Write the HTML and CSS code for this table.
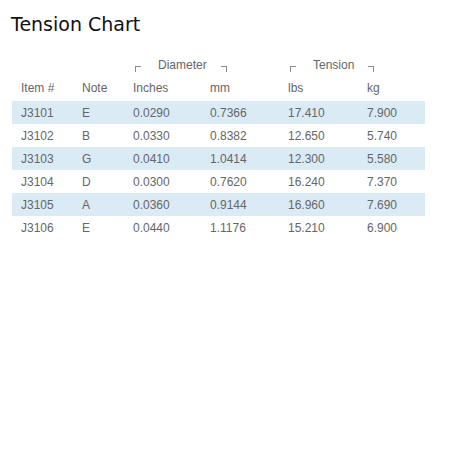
FILE: index.html
```html
<!DOCTYPE html>
<html>
<head>
<meta charset="utf-8">
<link rel="stylesheet" href="styles.css">
</head>
<body>
<h1 class="title">Tension Chart</h1>
<table class="chart">
  <colgroup>
    <col class="c-item"><col class="c-note"><col class="c-in"><col class="c-mm"><col class="c-lbs"><col class="c-kg">
  </colgroup>
  <thead>
    <tr class="group">
      <th></th><th></th>
      <th colspan="2"><span class="brk brk-l"></span><span class="gname">Diameter</span><span class="brk brk-r"></span></th>
      <th colspan="2"><span class="brk brk-l"></span><span class="gname">Tension</span><span class="brk brk-r"></span></th>
    </tr>
    <tr class="heads">
      <th>Item #</th><th>Note</th><th>Inches</th><th>mm</th><th>lbs</th><th>kg</th>
    </tr>
  </thead>
  <tbody>
    <tr class="alt"><td>J3101</td><td>E</td><td>0.0290</td><td>0.7366</td><td>17.410</td><td>7.900</td></tr>
    <tr><td>J3102</td><td>B</td><td>0.0330</td><td>0.8382</td><td>12.650</td><td>5.740</td></tr>
    <tr class="alt"><td>J3103</td><td>G</td><td>0.0410</td><td>1.0414</td><td>12.300</td><td>5.580</td></tr>
    <tr><td>J3104</td><td>D</td><td>0.0300</td><td>0.7620</td><td>16.240</td><td>7.370</td></tr>
    <tr class="alt"><td>J3105</td><td>A</td><td>0.0360</td><td>0.9144</td><td>16.960</td><td>7.690</td></tr>
    <tr><td>J3106</td><td>E</td><td>0.0440</td><td>1.1176</td><td>15.210</td><td>6.900</td></tr>
  </tbody>
</table>
</body>
</html>
```
FILE: styles.css
```css
html, body {
  margin: 0;
  padding: 0;
  background: #fff;
}
body {
  padding: 12px 0 0 11px;
}
.title {
  margin: 0;
  font-family: "DejaVu Sans", sans-serif;
  font-weight: normal;
  font-size: 19px;
  line-height: 24px;
  color: #111;
}
.chart {
  margin: 15px 0 0 1px;
  border-collapse: collapse;
  table-layout: fixed;
  width: 413px;
  font-family: "Liberation Sans", Arial, sans-serif;
  font-size: 12px;
  line-height: 14px;
  color: #666;
}
.c-item { width: 61px; }
.c-note { width: 51px; }
.c-in { width: 77px; }
.c-mm { width: 78px; }
.c-lbs { width: 79px; }
.c-kg { width: 67px; }
.chart th, .chart td {
  padding: 0 0 0 9px;
  text-align: left;
  font-weight: normal;
  white-space: nowrap;
}
.group th {
  height: 20px;
  padding-top: 4px;
  padding-left: 11px;
  vertical-align: middle;
}
.heads th {
  height: 26px;
  vertical-align: middle;
}
.chart td {
  height: 23px;
  vertical-align: middle;
}
.alt td {
  background: #dbebf6;
}
.gname {
  display: inline-block;
  margin: 0 14px 0 17px;
}
.brk {
  display: inline-block;
  width: 5px;
  height: 5px;
  border-top: 1px solid #8a8a8a;
  vertical-align: -3px;
}
.brk-l {
  border-left: 1px solid #8a8a8a;
}
.brk-r {
  border-right: 1px solid #8a8a8a;
}
```
